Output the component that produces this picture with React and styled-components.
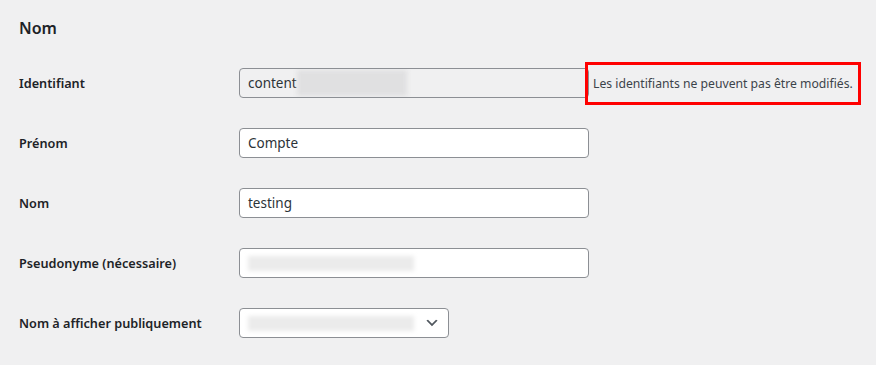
import React from "react";
import styled, { createGlobalStyle } from "styled-components";

const GlobalStyle = createGlobalStyle`
	html, body {
		margin: 0;
		padding: 0;
		background: #f0f0f1;
	}
	body {
		font-family: "Noto Sans", "Open Sans", sans-serif;
		color: #1d2327;
	}
`;

const Page = styled.div`
	width: 876px;
	height: 365px;
	padding: 0 19px;
	box-sizing: border-box;
	overflow: hidden;
`;

const Heading = styled.h2`
	margin: 0;
	height: 53px;
	display: flex;
	align-items: center;
	padding-top: 2px;
	box-sizing: border-box;
	font-size: 16px;
	font-weight: 600;
	color: #1d2327;
`;

const Row = styled.div`
	display: grid;
	grid-template-columns: 220px 1fr;
	align-items: center;
	height: 60px;
`;

const Label = styled.label`
	font-size: 12.7px;
	font-weight: 600;
	color: #1d2327;
`;

const Cell = styled.div`
	display: flex;
	align-items: center;
`;

const Field = styled.div`
	position: relative;
	display: flex;
	align-items: center;
	box-sizing: border-box;
	width: ${(p) => p.$width || 350}px;
	height: 30px;
	padding: 0 8px;
	border: 1px solid #8c8f94;
	border-radius: 4px;
	background: ${(p) => (p.$disabled ? "#f0f0f1" : "#fff")};
	color: #2c3338;
	font-size: 13.5px;
	white-space: nowrap;
	overflow: hidden;
`;

const Blur = styled.span`
	display: inline-block;
	width: ${(p) => p.$width}px;
	height: ${(p) => p.$height}px;
	background: ${(p) => p.$color};
	filter: blur(2px);
	flex-shrink: 0;
`;

const Description = styled.span`
	position: relative;
	margin-left: -4px;
	padding: 10px 5px 10px 5px;
	border: 3px solid #f00;
	font-size: 12.2px;
	color: #3c434a;
	white-space: nowrap;
`;

const Chevron = styled.svg`
	position: absolute;
	right: 8px;
	top: 50%;
	width: 16px;
	height: 16px;
	margin-top: -8px;
`;

export default function App() {
	return (
		<>
			<GlobalStyle />
			<Page>
				<Heading>Nom</Heading>
				<Row>
					<Label>Identifiant</Label>
					<Cell>
						<Field $disabled>
							content
							<Blur $width={110} $height={26} $color="#e0e0e1" />
						</Field>
						<Description>Les identifiants ne peuvent pas être modifiés.</Description>
					</Cell>
				</Row>
				<Row>
					<Label>Prénom</Label>
					<Cell>
						<Field>Compte</Field>
					</Cell>
				</Row>
				<Row>
					<Label>Nom</Label>
					<Cell>
						<Field>testing</Field>
					</Cell>
				</Row>
				<Row>
					<Label>Pseudonyme (nécessaire)</Label>
					<Cell>
						<Field>
							<Blur $width={166} $height={15} $color="#ebebeb" />
						</Field>
					</Cell>
				</Row>
				<Row>
					<Label>Nom à afficher publiquement</Label>
					<Cell>
						<Field $width={210}>
							<Blur $width={166} $height={15} $color="#ebebeb" />
							<Chevron viewBox="0 0 20 20">
								<path d="M5 6l5 5 5-5 2 1-7 7-7-7 2-1z" fill="#50575e" />
							</Chevron>
						</Field>
					</Cell>
				</Row>
			</Page>
		</>
	);
}
